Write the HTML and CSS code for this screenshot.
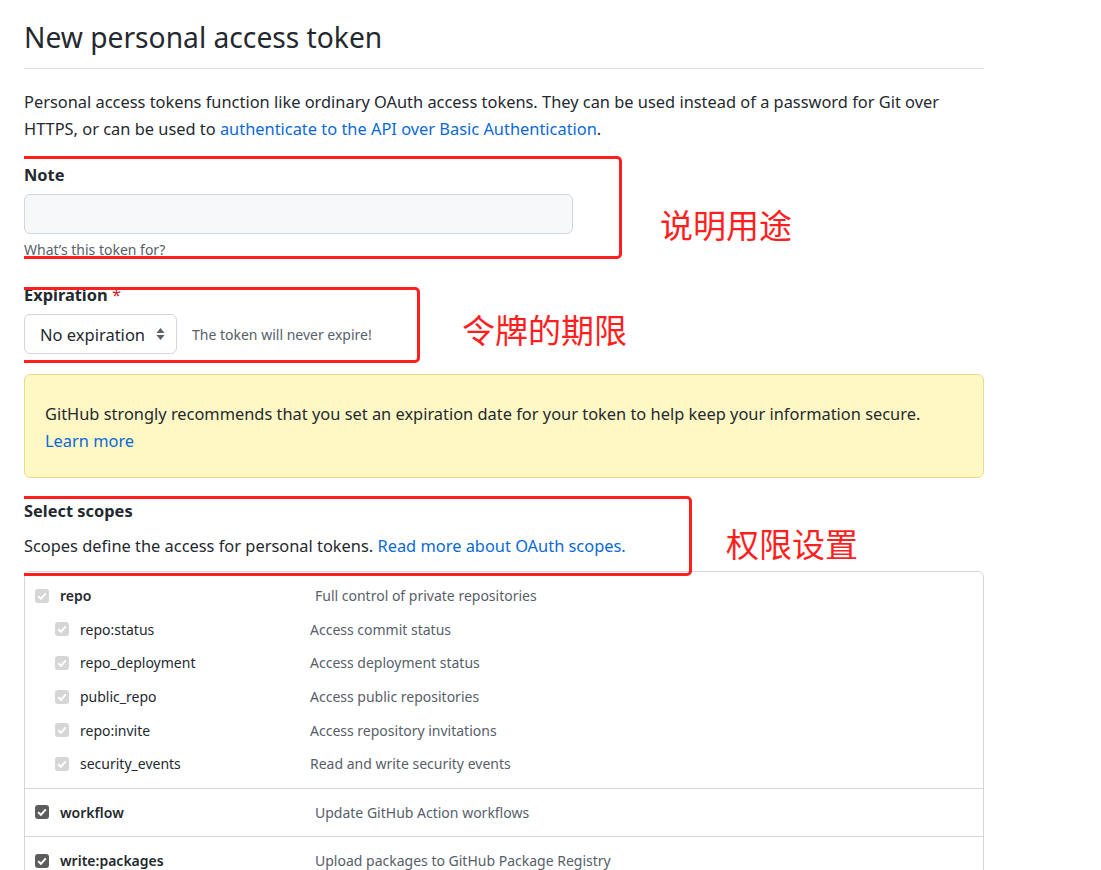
FILE: index.html
```html
<!DOCTYPE html>
<html lang="en">
<head>
<meta charset="utf-8">
<title>New personal access token</title>
<link rel="stylesheet" href="styles.css">
</head>
<body>
<div class="page">
  <h1 class="title">New personal access token</h1>
  <p class="intro">Personal access tokens function like ordinary OAuth access tokens. They can be used instead of a password for Git over HTTPS, or can be used to <a href="#">authenticate to the API over Basic Authentication</a>.</p>

  <div class="field note-field">
    <label class="label">Note</label>
    <div class="input"></div>
    <p class="hint">What’s this token for?</p>
  </div>

  <div class="field exp-field">
    <label class="label">Expiration <span class="req">*</span></label>
    <div class="exp-row">
      <div class="select">No expiration
        <svg class="sel-arrow" width="9" height="14" viewBox="0 0 9 14"><path d="M4.5 1 L8.5 6 H0.5 Z M4.5 13 L8.5 8 H0.5 Z" fill="#57606a"/></svg>
      </div>
      <span class="exp-note">The token will never expire!</span>
    </div>
  </div>

  <div class="flash">GitHub strongly recommends that you set an expiration date for your token to help keep your information secure.<br><a href="#">Learn more</a></div>

  <div class="field scopes-field">
    <label class="label">Select scopes</label>
    <p class="scopes-desc">Scopes define the access for personal tokens. <a href="#">Read more about OAuth scopes.</a></p>
  </div>

  <div class="scopes">
    <div class="group">
      <div class="row top"><span class="cb off"><svg viewBox="0 0 14 14"><path d="M3.2 7.2 L5.9 9.8 L10.8 4.3" fill="none" stroke="#fff" stroke-width="2"/></svg></span><span class="name">repo</span><span class="desc">Full control of private repositories</span></div>
      <div class="row sub"><span class="cb off"><svg viewBox="0 0 14 14"><path d="M3.2 7.2 L5.9 9.8 L10.8 4.3" fill="none" stroke="#fff" stroke-width="2"/></svg></span><span class="name">repo:status</span><span class="desc">Access commit status</span></div>
      <div class="row sub"><span class="cb off"><svg viewBox="0 0 14 14"><path d="M3.2 7.2 L5.9 9.8 L10.8 4.3" fill="none" stroke="#fff" stroke-width="2"/></svg></span><span class="name">repo_deployment</span><span class="desc">Access deployment status</span></div>
      <div class="row sub"><span class="cb off"><svg viewBox="0 0 14 14"><path d="M3.2 7.2 L5.9 9.8 L10.8 4.3" fill="none" stroke="#fff" stroke-width="2"/></svg></span><span class="name">public_repo</span><span class="desc">Access public repositories</span></div>
      <div class="row sub"><span class="cb off"><svg viewBox="0 0 14 14"><path d="M3.2 7.2 L5.9 9.8 L10.8 4.3" fill="none" stroke="#fff" stroke-width="2"/></svg></span><span class="name">repo:invite</span><span class="desc">Access repository invitations</span></div>
      <div class="row sub"><span class="cb off"><svg viewBox="0 0 14 14"><path d="M3.2 7.2 L5.9 9.8 L10.8 4.3" fill="none" stroke="#fff" stroke-width="2"/></svg></span><span class="name">security_events</span><span class="desc">Read and write security events</span></div>
    </div>
    <div class="group">
      <div class="row top"><span class="cb on"><svg viewBox="0 0 14 14"><path d="M3.2 7.2 L5.9 9.8 L10.8 4.3" fill="none" stroke="#fff" stroke-width="2"/></svg></span><span class="name">workflow</span><span class="desc">Update GitHub Action workflows</span></div>
    </div>
    <div class="group">
      <div class="row top"><span class="cb on"><svg viewBox="0 0 14 14"><path d="M3.2 7.2 L5.9 9.8 L10.8 4.3" fill="none" stroke="#fff" stroke-width="2"/></svg></span><span class="name">write:packages</span><span class="desc">Upload packages to GitHub Package Registry</span></div>
    </div>
  </div>

  <div class="mark mark-note"></div>
  <div class="mark mark-exp"></div>
  <div class="mark mark-scope"></div>
  <div class="ann ann-note">说明用途</div>
  <div class="ann ann-exp">令牌的期限</div>
  <div class="ann ann-scope">权限设置</div>
</div>
</body>
</html>
```

FILE: styles.css
```css
html, body {
  margin: 0;
  padding: 0;
  background: #ffffff;
}
body {
  font-family: "Noto Sans", "Open Sans", sans-serif;
  color: #24292f;
  font-size: 16.4px;
}
a {
  color: #0969da;
  text-decoration: none;
}
.page {
  position: relative;
  width: 960px;
  margin-left: 24px;
  height: 870px;
  overflow: hidden;
}
.title {
  margin: 0;
  padding-top: 17px;
  padding-bottom: 11px;
  font-size: 28.2px;
  font-weight: 400;
  line-height: 40px;
  border-bottom: 1px solid #d8dee4;
}
.intro {
  margin: 19px 0 0;
  line-height: 27px;
}
.field {
  display: flex;
  flex-direction: column;
}
.label {
  font-weight: 700;
  font-size: 16.4px;
  line-height: 26px;
}
.note-field {
  margin-top: 20px;
}
.input {
  margin-top: 6px;
  width: 547px;
  height: 38px;
  border: 1px solid #d0d7de;
  border-radius: 6px;
  background: #f6f8fa;
}
.hint {
  margin: 7px 0 0;
  font-size: 14px;
  line-height: 18px;
  color: #57606a;
}
.exp-field {
  margin-top: 23px;
}
.req {
  color: #cf222e;
  font-weight: 400;
}
.exp-row {
  margin-top: 6px;
  display: flex;
  align-items: center;
  gap: 15px;
}
.select {
  box-sizing: border-box;
  height: 40px;
  width: 153px;
  border: 1px solid #d0d7de;
  border-radius: 6px;
  display: flex;
  align-items: center;
  justify-content: space-between;
  padding: 0 11px 0 15px;
  font-size: 16.5px;
}
.exp-note {
  font-size: 14px;
  color: #57606a;
}
.flash {
  margin-top: 20px;
  padding: 25px 20px 23px;
  background: #fff8c5;
  border: 1px solid #eed888;
  border-radius: 6px;
  line-height: 27px;
}
.scopes-field {
  margin-top: 20px;
}
.scopes-desc {
  margin: 8px 0 0;
  line-height: 27px;
}
.scopes {
  margin-top: 12px;
  border: 1px solid #d0d7de;
  border-radius: 6px;
  font-size: 14px;
}
.group {
  padding: 7px 0;
  border-bottom: 1px solid #d0d7de;
}
.row {
  display: flex;
  align-items: center;
  height: 33.6px;
}
.cb {
  box-sizing: border-box;
  width: 14px;
  height: 14px;
  border-radius: 3px;
  display: inline-flex;
  flex: none;
}
.cb svg {
  width: 14px;
  height: 14px;
}
.cb.off {
  background: #d6d6d6;
}
.cb.on {
  background: #5c5c5c;
}
.row.top {
  padding-left: 10px;
}
.row.sub {
  padding-left: 30px;
}
.name {
  margin-left: 11px;
}
.row.top .name {
  width: 255px;
  font-weight: 600;
}
.row.sub .name {
  width: 230px;
}
.desc {
  color: #57606a;
}
.mark {
  position: absolute;
  border: 3px solid #ff1f1f;
  border-radius: 5px;
  box-sizing: border-box;
}
.mark-note {
  left: -11px;
  top: 156px;
  width: 609px;
  height: 103px;
}
.mark-exp {
  left: -15px;
  top: 287px;
  width: 411px;
  height: 76px;
}
.mark-scope {
  left: -11px;
  top: 496px;
  width: 679px;
  height: 80px;
}
.ann {
  position: absolute;
  color: #ff1f1f;
  font-family: "Noto Sans CJK SC", sans-serif;
  font-size: 33px;
  line-height: 40px;
}
.ann-note {
  left: 636px;
  top: 204px;
}
.ann-exp {
  left: 438px;
  top: 309px;
}
.ann-scope {
  left: 702px;
  top: 523px;
}
```
